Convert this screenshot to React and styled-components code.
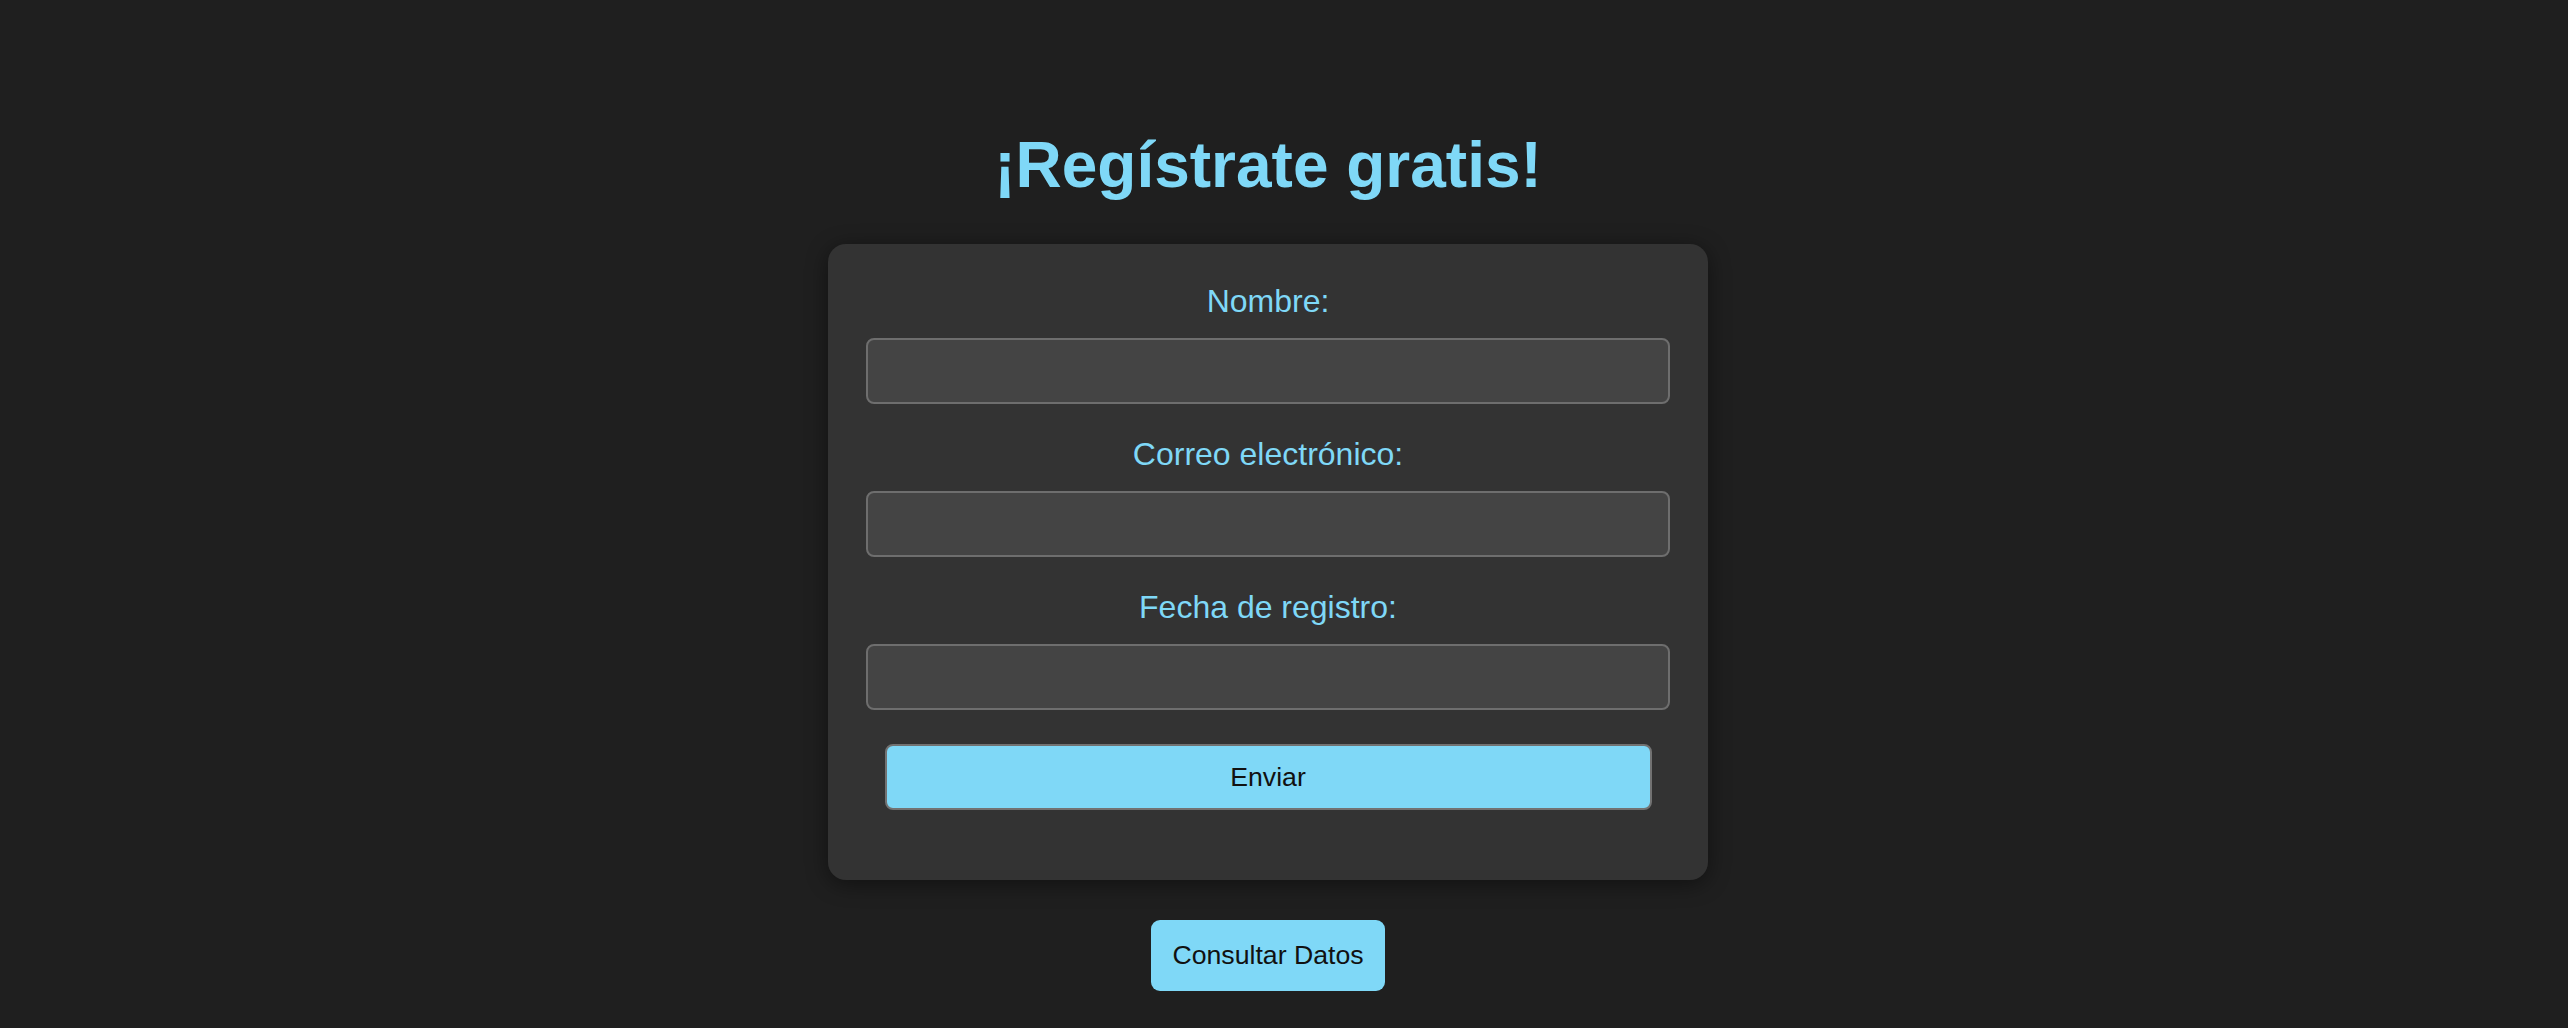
import React from 'react';
import styled, { createGlobalStyle } from 'styled-components';

const GlobalStyle = createGlobalStyle`
  html, body {
    margin: 0;
    padding: 0;
    background: #1f1f1f;
  }
  * {
    box-sizing: border-box;
  }
`;

const Page = styled.main`
  min-height: 100vh;
  display: flex;
  flex-direction: column;
  align-items: center;
  padding: 128px 32px 0 0;
  background: #1f1f1f;
  font-family: 'Liberation Sans', Arial, sans-serif;
`;

const Title = styled.h1`
  margin: 0 0 42px;
  font-size: 64px;
  line-height: 74px;
  font-weight: 700;
  color: #7fd8f7;
`;

const Card = styled.form`
  width: 880px;
  padding: 39px 38px 70px;
  background: #333333;
  border-radius: 18px;
  box-shadow: 0 4px 22px rgba(0, 0, 0, 0.45);
  display: flex;
  flex-direction: column;
`;

const Field = styled.div`
  display: flex;
  flex-direction: column;
  align-items: center;
  gap: 18px;
  margin-bottom: ${(p) => (p.last ? '34px' : '32px')};
`;

const Label = styled.label`
  font-size: 32px;
  line-height: 37px;
  color: #7fd8f7;
`;

const Input = styled.input`
  width: 100%;
  height: 66px;
  padding: 0 16px;
  background: #444444;
  border: 2px solid #6e6e6e;
  border-radius: 8px;
  color: #eeeeee;
  font-family: 'Liberation Sans', Arial, sans-serif;
  font-size: 26.67px;
  outline: none;
`;

const SubmitButton = styled.button`
  align-self: center;
  width: 767px;
  height: 66px;
  background: #7fd8f7;
  border: 2px solid #727272;
  border-radius: 8px;
  color: #111111;
  font-family: 'Liberation Sans', Arial, sans-serif;
  font-size: 26.67px;
  cursor: pointer;
`;

const QueryButton = styled.button`
  margin-top: 40px;
  padding: 20px 21px;
  background: #7fd8f7;
  border: none;
  border-radius: 9px;
  color: #111111;
  font-family: 'Liberation Sans', Arial, sans-serif;
  font-size: 26.67px;
  line-height: 31px;
  cursor: pointer;
`;

const fields = [
  { id: 'nombre', label: 'Nombre:', type: 'text' },
  { id: 'correo', label: 'Correo electrónico:', type: 'email' },
  { id: 'fecha', label: 'Fecha de registro:', type: 'text' },
];

const App = () => {
  return (
    <>
      <GlobalStyle />
      <Page>
        <Title>¡Regístrate gratis!</Title>
        <Card onSubmit={(e) => e.preventDefault()}>
          {fields.map((f, i) => (
            <Field key={f.id} last={i === fields.length - 1}>
              <Label htmlFor={f.id}>{f.label}</Label>
              <Input id={f.id} type={f.type} />
            </Field>
          ))}
          <SubmitButton type="submit">Enviar</SubmitButton>
        </Card>
        <QueryButton type="button">Consultar Datos</QueryButton>
      </Page>
    </>
  );
};

export default App;
